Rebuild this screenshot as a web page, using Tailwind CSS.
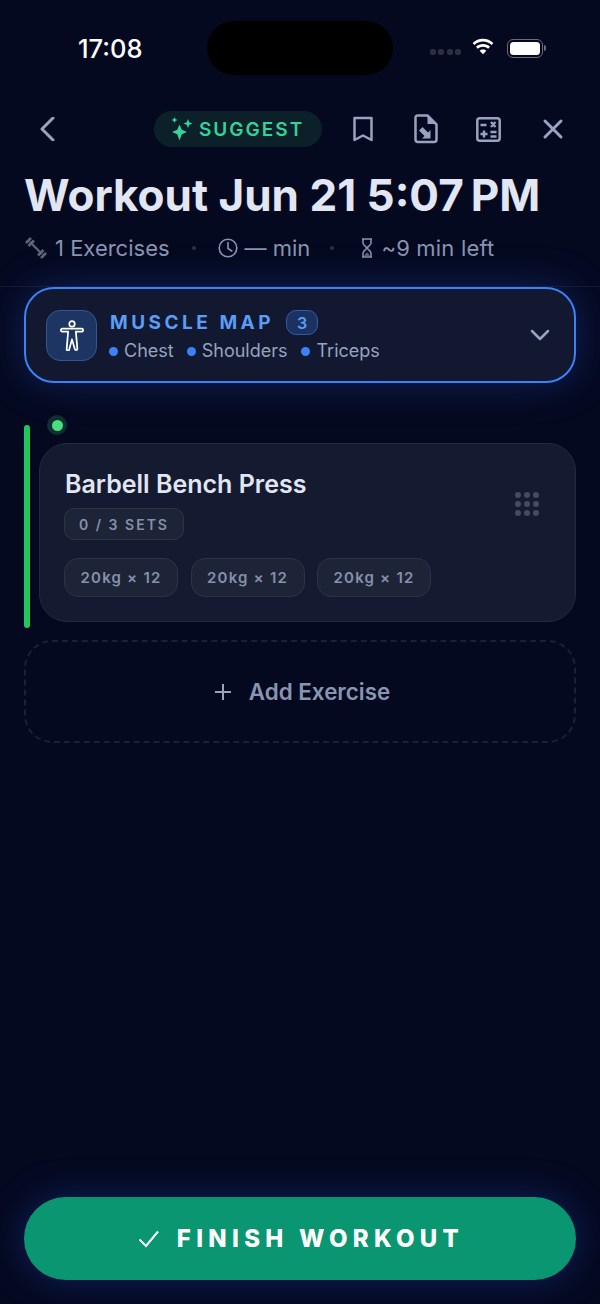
<!doctype html>
<html>
<head>
<meta charset="utf-8">
<script src="https://cdn.jsdelivr.net/npm/@tailwindcss/browser@4"></script>
</head>
<body class="m-0 bg-[#050920]">
<div class="relative flex h-[1304px] w-[600px] flex-col overflow-hidden bg-[#050920] font-['Inter',sans-serif]">
  <!-- status bar -->
  <div class="flex h-[96px] shrink-0 items-start justify-between">
    <div class="mt-[34px] ml-[78px] text-[25.500px] leading-[30px] font-medium text-white">17:08</div>
    <div class="absolute top-[21px] left-[207px] h-[54px] w-[186px] rounded-full bg-black"></div>
    <div class="mt-[39px] mr-[57px] flex items-center">
      <div class="mt-[7px] flex gap-[2.500px]">
        <span class="size-[6px] rounded-[2px] bg-[#2c2e42]"></span><span class="size-[6px] rounded-[2px] bg-[#2c2e42]"></span><span class="size-[6px] rounded-[2px] bg-[#2c2e42]"></span><span class="size-[6px] rounded-[2px] bg-[#2c2e42]"></span>
      </div>
      <svg class="ml-[10px] -mt-[3px]" width="24" height="19" viewBox="0 0 23 18" fill="#fff"><path d="M11.5 3.2c3.2 0 6.1 1.2 8.3 3.3l1.6-1.8C18.800 2.200 15.300.7 11.500.7S4.200 2.200 1.600 4.700l1.600 1.800c2.200-2.100 5.100-3.300 8.300-3.300z"/><path d="M11.500 8.200c1.900 0 3.600.7 5 1.900l1.700-1.800c-1.800-1.600-4.200-2.600-6.700-2.600s-4.900 1-6.700 2.600l1.700 1.800c1.400-1.200 3.100-1.900 5-1.900z"/><path d="M11.500 10.800c-1.300 0-2.400.5-3.200 1.200l3.200 3.500 3.200-3.500c-.8-.7-1.900-1.200-3.200-1.200z"/></svg>
      <div class="relative ml-[12px] flex h-[19px] w-[36px] items-center justify-center rounded-[6px] border-[1.500px] border-[#6a6c7c]">
        <div class="h-[13px] w-[30px] rounded-[3.500px] bg-white"></div>
        <div class="absolute top-[5px] -right-[4px] h-[6px] w-[2px] rounded-r-full bg-[#6a6c7c]"></div>
      </div>
    </div>
  </div>
  <!-- nav -->
  <div class="flex h-[66px] shrink-0 items-center pr-[34px] pl-[38px]">
    <svg width="20" height="24" viewBox="0 0 20 24" fill="none" stroke="#97a3bf" stroke-width="3" stroke-linecap="round" stroke-linejoin="round"><path d="M15 1 L4 12 L15 23"/></svg>
    <div class="ml-[96px] flex h-[36px] w-[168px] items-center gap-[5px] rounded-full bg-[#0b2029] pl-[15px]">
      <svg width="25" height="25" viewBox="0 0 25 25" fill="#34d399" class="shrink-0"><path d="M10.500 7.500l2.300 5.200 5.200 2.300-5.200 2.300-2.300 6.200-2.300-6.200L3 15l5.200-2.300z"/><path d="M19 2l1.300 3.200 3.200 1.300-3.200 1.300L19 11l-1.300-3.200-3.200-1.300 3.200-1.300z"/><path d="M5.500 0l.9 2.100 2.100.9-2.100.9-.9 2.100-.9-2.100-2.100-.9 2.100-.9z"/></svg>
      <span class="text-[19px] leading-none font-semibold tracking-[2px] text-[#34d399]">SUGGEST</span>
    </div>
    <svg class="ml-[30px]" width="22" height="26" viewBox="0 0 22 26" fill="none" stroke="#97a3bf" stroke-width="2.500" stroke-linejoin="round"><path d="M2.500 2h17v22l-8.500-4.500L2.500 24z"/></svg>
    <svg class="ml-[40px]" width="24" height="30" viewBox="0 0 24 30" fill="none"><path d="M3.500 1.500h10l9 9v15a2.500 2.500 0 0 1-2.500 2.500H3.500A2.500 2.500 0 0 1 1.500 25.500v-22a2 2 0 0 1 2-2z" stroke="#97a3bf" stroke-width="2.500" stroke-linejoin="round"/><path d="M13.500 1.500v8.500h9z" fill="#97a3bf"/><path d="M8.500 13l5.500 5.500 2.500-2.500v8.500H8l2.500-2.500L5 16.500z" fill="#97a3bf"/></svg>
    <svg class="ml-[38px]" width="25" height="25" viewBox="0 0 25 25" fill="none"><rect x="1.300" y="1.300" width="22.400" height="22.400" rx="2.500" stroke="#97a3bf" stroke-width="2.500"/><g stroke="#97a3bf" stroke-width="2.400"><path d="M4.500 8h6M15 5l4.500 5M19.500 5L15 10M4.500 17h7M8 13.500v7M14.500 15h6M14.500 19.500h6"/></g></svg>
    <svg class="ml-[41px]" width="22" height="22" viewBox="0 0 22 22" fill="none" stroke="#97a3bf" stroke-width="3" stroke-linecap="round"><path d="M3 3l16 16M19 3L3 19"/></svg>
  </div>
  <!-- title -->
  <div class="px-[25px]">
    <h1 class="mt-[8px] -ml-[1px] text-[44px] leading-[50px] font-bold whitespace-nowrap text-[#e2e6f3]">Workout Jun 21 5:07&#8239;PM</h1>
    <div class="mt-[11px] flex h-[34px] items-center text-[22px] text-[#8995b0]">
      <svg width="22" height="22" viewBox="0 0 22 22" class="shrink-0" fill="none" stroke="#5c677f"><path d="M5 5L17 17" stroke-width="2.200"/><path d="M1 6L6 1M3.500 9L9 3.500M13 18.500L18.500 13M16 21L21 16" stroke-width="2.500"/></svg>
      <span class="ml-[8px]">1 Exercises</span>
      <span class="ml-[22px] size-[4px] rounded-full bg-[#2b3247]"></span>
      <svg class="ml-[22px]" width="20" height="20" viewBox="0 0 20 20" fill="none" stroke="#8995b0" stroke-width="1.600"><circle cx="10" cy="10" r="8.800"/><path d="M10 4.500V10.500L13.800 13" stroke-linecap="round"/></svg>
      <span class="ml-[7px]">— min</span>
      <span class="ml-[20px] size-[4px] rounded-full bg-[#2b3247]"></span>
      <svg class="ml-[27px]" width="12" height="20" viewBox="0 0 12 20" fill="none" stroke="#8995b0" stroke-width="1.500"><path d="M1 1h10M1 19h10M2 1v4c0 2 3 3.500 4 5 1 1.500 4 3 4 5v4M10 1v4c0 2-3 3.500-4 5-1 1.500-4 3-4 5v4"/><path d="M3.500 17l2.500-2.500 2.500 2.500v1h-5z" fill="#5c677f" stroke="none"/></svg>
      <span class="ml-[8px] tracking-[0.200px]">~9 min left</span>
    </div>
  </div>
  <div class="mt-[21px] h-px shrink-0 bg-[#14182c]"></div>
  <!-- muscle map -->
  <div class="mx-[24px] flex h-[96px] shrink-0 items-center rounded-[30px] border-2 border-[#3b82f6] bg-[#111830] pr-[24px] pl-[20px] shadow-[0_0_38px_rgba(37,84,200,0.35)]">
    <div class="flex size-[51px] shrink-0 items-center justify-center rounded-[14px] border border-[#34558f] bg-[#1d3562]">
      <svg width="26" height="31" viewBox="0 0 26 32" fill="none" stroke="#fff" stroke-width="1.800" stroke-linejoin="round"><circle cx="13" cy="4" r="2.800"/><path d="M1.500 10.500a1.500 1.500 0 0 1 1.500-1.500h20a1.500 1.500 0 0 1 0 3H17l1.500 17.500a1.300 1.300 0 0 1-2.600.5L13 20l-2.900 10.500a1.300 1.300 0 0 1-2.600-.5L9 12H3A1.500 1.500 0 0 1 1.500 10.500z"/></svg>
    </div>
    <div class="ml-[13px] flex-1 pt-[4px]">
      <div class="flex items-center">
        <span class="text-[19px] leading-[24px] font-bold tracking-[3.500px] text-[#5b9cf6]">MUSCLE MAP</span>
        <span class="ml-[12px] flex h-[25px] w-[32px] items-center justify-center rounded-[10px] border border-[#2f5ba8] bg-[#1b3260] text-[16px] font-semibold text-[#5b9cf6]">3</span>
      </div>
      <div class="mt-[3px] flex items-center text-[18px] leading-[26px] text-[#97a3bf]">
        <span class="-ml-[1px] size-[9px] rounded-full bg-[#3b82f6]"></span><span class="ml-[6px]">Chest</span>
        <span class="ml-[13px] size-[9px] rounded-full bg-[#3b82f6]"></span><span class="ml-[6px]">Shoulders</span>
        <span class="ml-[14px] size-[9px] rounded-full bg-[#3b82f6]"></span><span class="ml-[6px]">Triceps</span>
      </div>
    </div>
    <svg width="20" height="12" viewBox="0 0 20 12" fill="none" stroke="#97a3bf" stroke-width="2.500" stroke-linecap="round" stroke-linejoin="round"><path d="M2 2l8 8 8-8"/></svg>
  </div>
  <!-- exercise -->
  <div class="relative mx-[24px] mt-[42px] h-[203px] shrink-0 pt-[18px] pl-[15px]">
    <div class="absolute top-0 left-0 h-[203px] w-[6px] rounded-full bg-[#22c55e]"></div>
    <div class="absolute top-[-10px] left-[23px] flex size-[20px] items-center justify-center rounded-full bg-[#0e3030]"><span class="size-[11px] rounded-full bg-[#4ade80]"></span></div>
    <div class="relative h-[179px] rounded-[28px] border border-[#222941] bg-[#141a2f] pt-[25px] pl-[24px]">
      <div class="ml-[1px] text-[25px] leading-[30px] font-semibold text-[#e2e6f3]">Barbell Bench Press</div>
      <div class="mt-[9px] flex h-[32px] w-[120px] items-center justify-center rounded-[10px] border border-[#2c3349] bg-[#1e2438] text-[14px] font-semibold tracking-[2px] text-[#8590aa]">0 / 3 SETS</div>
      <div class="mt-[18px] flex gap-[12.500px]">
        <div class="flex h-[39px] w-[114px] items-center justify-center rounded-[14px] border border-[#2c3349] bg-[#1e2438] pt-[1px] text-[15px] font-semibold tracking-[1.200px] text-[#8590aa]">20kg × 12</div>
        <div class="flex h-[39px] w-[114px] items-center justify-center rounded-[14px] border border-[#2c3349] bg-[#1e2438] pt-[1px] text-[15px] font-semibold tracking-[1.200px] text-[#8590aa]">20kg × 12</div>
        <div class="flex h-[39px] w-[114px] items-center justify-center rounded-[14px] border border-[#2c3349] bg-[#1e2438] pt-[1px] text-[15px] font-semibold tracking-[1.200px] text-[#8590aa]">20kg × 12</div>
      </div>
      <div class="absolute top-[48px] right-[36px] grid grid-cols-3 gap-[3px]">
        <span class="size-[6px] rounded-full bg-[#454b60]"></span><span class="size-[6px] rounded-full bg-[#454b60]"></span><span class="size-[6px] rounded-full bg-[#454b60]"></span><span class="size-[6px] rounded-full bg-[#454b60]"></span><span class="size-[6px] rounded-full bg-[#454b60]"></span><span class="size-[6px] rounded-full bg-[#454b60]"></span><span class="size-[6px] rounded-full bg-[#454b60]"></span><span class="size-[6px] rounded-full bg-[#454b60]"></span><span class="size-[6px] rounded-full bg-[#454b60]"></span>
      </div>
    </div>
  </div>
  <!-- add -->
  <div class="mx-[24px] mt-[12px] flex h-[103px] shrink-0 items-center justify-center rounded-[28px] border-2 border-dashed border-[#1a2035] pl-[5px]">
    <svg width="16" height="16" viewBox="0 0 16 16" fill="none" stroke="#97a3bf" stroke-width="2"><path d="M8 0v16M0 8h16"/></svg>
    <span class="ml-[18px] text-[22.400px] font-semibold text-[#8995b0]">Add Exercise</span>
  </div>
  <!-- finish -->
  <div class="mx-[24px] mt-auto mb-[24px] flex h-[83px] shrink-0 items-center justify-center rounded-full bg-[#0a9670] pl-[2px] shadow-[0_0_36px_rgba(30,70,190,0.4)]">
    <svg width="22" height="18" viewBox="0 0 22 18" fill="none" stroke="#fff" stroke-width="2"><path d="M1.500 9.500l6.500 6.500L20 1.500"/></svg>
    <span class="ml-[17px] text-[24px] font-extrabold tracking-[5.300px] text-white">FINISH WORKOUT</span>
  </div>
</div>
</body>
</html>
